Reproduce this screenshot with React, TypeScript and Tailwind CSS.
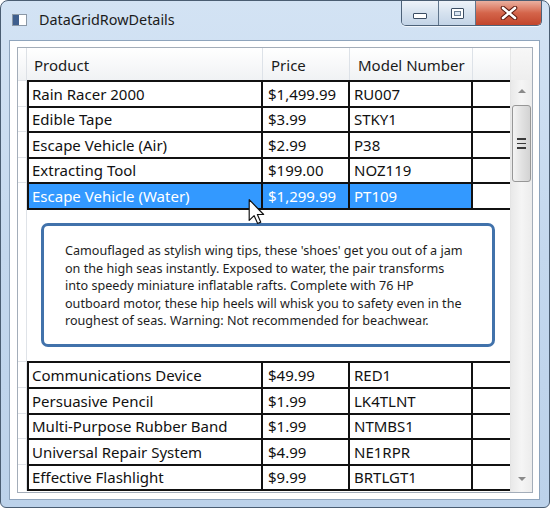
import clsx from "clsx";

type Item = [string, string, string];

const topItems: Item[] = [
  ["Rain Racer 2000", "$1,499.99", "RU007"],
  ["Edible Tape", "$3.99", "STKY1"],
  ["Escape Vehicle (Air)", "$2.99", "P38"],
  ["Extracting Tool", "$199.00", "NOZ119"],
  ["Escape Vehicle (Water)", "$1,299.99", "PT109"],
];

const bottomItems: Item[] = [
  ["Communications Device", "$49.99", "RED1"],
  ["Persuasive Pencil", "$1.99", "LK4TLNT"],
  ["Multi-Purpose Rubber Band", "$1.99", "NTMBS1"],
  ["Universal Repair System", "$4.99", "NE1RPR"],
  ["Effective Flashlight", "$9.99", "BRTLGT1"],
];

const description = [
  "Camouflaged as stylish wing tips, these 'shoes' get you out of a jam",
  "on the high seas instantly. Exposed to water, the pair transforms",
  "into speedy miniature inflatable rafts. Complete with 76 HP",
  "outboard motor, these hip heels will whisk you to safety even in the",
  "roughest of seas. Warning: Not recommended for beachwear.",
];

function Row({ item, selected, last }: { item: Item; selected?: boolean; last?: boolean }) {
  const cell = clsx("flex items-center overflow-hidden whitespace-nowrap", selected ? "bg-[#3399ff] text-white" : "text-[#111]");
  return (
    <div className={clsx("flex shrink-0", last ? "h-[27.6px]" : "h-[25.6px]")}>
      <div className="w-[9px] shrink-0 border-r border-t border-[#dfe3e8]" />
      <div className={clsx("flex flex-1 border-t-2 border-[#111]", last && "border-b-2")}>
        <div className={clsx(cell, "w-[236px] border-x-2 border-[#111] pl-[3px]")}>{item[0]}</div>
        <div className={clsx(cell, "w-[87px] border-r-2 border-[#111] pl-[5px]")}>{item[1]}</div>
        <div className={clsx(cell, "w-[123px] border-r-2 border-[#111] pl-[4px]")}>{item[2]}</div>
        <div className="flex-1 bg-white" />
      </div>
    </div>
  );
}

function Cursor() {
  return (
    <svg className="absolute left-[247px] top-[198px]" width="18" height="26" viewBox="0 0 13 20">
      <path
        d="M0.5 0.5 L0.5 16.5 L4.3 12.8 L7 18.8 L9.4 17.8 L6.8 11.9 L11.6 11.9 Z"
        fill="white"
        stroke="#111"
        strokeWidth="0.9"
        strokeLinejoin="round"
      />
    </svg>
  );
}

function TitleButtons() {
  return (
    <div className="mr-[7px] flex h-[25px] overflow-hidden rounded-b-[5px] border border-t-0 border-[#4d6279] shadow-[0_1px_0_rgba(255,255,255,0.7)]">
      <div className="flex w-[37px] items-center justify-center border-r border-[#60758c] bg-gradient-to-b from-[#eef3f9] via-[#d6e2ef] to-[#c3d4e7]">
        <div className="mt-[6px] h-[6px] w-[14px] rounded-[1px] border border-[#3b4d63] bg-white" />
      </div>
      <div className="flex w-[37px] items-center justify-center border-r border-[#60758c] bg-gradient-to-b from-[#eef3f9] via-[#d6e2ef] to-[#c3d4e7]">
        <div className="h-[11px] w-[13px] rounded-[1px] border border-[#3b4d63] bg-white p-[2px]">
          <div className="h-full w-full border border-[#6b7f95] bg-[#dbe6f2]" />
        </div>
      </div>
      <div className="flex w-[65px] items-center justify-center bg-gradient-to-b from-[#eab0a0] via-[#d4644a] to-[#c2452c]">
        <svg width="18" height="14" viewBox="0 0 18 14">
          <path d="M3 2 L15 12 M15 2 L3 12" stroke="#5a1a10" strokeWidth="4.6" strokeLinecap="round" />
          <path d="M3 2 L15 12 M15 2 L3 12" stroke="white" strokeWidth="2.6" strokeLinecap="round" />
        </svg>
      </div>
    </div>
  );
}

function ScrollBar() {
  return (
    <div className="flex w-[22px] shrink-0 flex-col border-l border-[#e4e4e4] bg-gradient-to-r from-[#e9e9e9] via-[#f5f5f5] to-[#ececec]">
      <div className="h-[32px] shrink-0 bg-gradient-to-b from-[#f7f7f7] to-[#eeeeee]" />
      <div className="flex h-[25px] shrink-0 items-center justify-center pb-[3px]">
        <div className="h-0 w-0 border-x-[4px] border-b-[4px] border-x-transparent border-b-[#8a8a8a]" />
      </div>
      <div className="mx-[1px] flex h-[77px] shrink-0 flex-col items-center justify-center gap-[3px] rounded-[3px] border border-[#979797] bg-gradient-to-r from-[#f4f4f4] via-[#e2e2e2] to-[#d3d3d3] pr-[1px]">
        <div className="h-[1.5px] w-[9px] bg-[#3a3a3a]" />
        <div className="h-[1.5px] w-[9px] bg-[#3a3a3a]" />
        <div className="h-[1.5px] w-[9px] bg-[#3a3a3a]" />
      </div>
      <div className="flex-1" />
      <div className="flex h-[28px] shrink-0 items-center justify-center pt-[2px]">
        <div className="h-0 w-0 border-x-[4px] border-t-[4px] border-x-transparent border-t-[#8a8a8a]" />
      </div>
    </div>
  );
}

export default function App() {
  return (
    <div className="h-[509px] w-[551px] bg-white font-['Noto_Sans',sans-serif]">
      <div className="relative flex h-[508px] w-[550px] flex-col rounded-t-[8px] rounded-b-[6px] border border-[#4a5d72] bg-gradient-to-b from-[#d3e3f4] via-[#c4d8ee] to-[#bcd2ea]">
        <div className="flex h-[39px] shrink-0 items-start justify-between">
          <div className="flex h-[38px] items-center pl-[11px]">
            <div className="flex h-[12px] w-[15px] border border-[#8b98a6] bg-white">
              <div className="w-[6px] bg-[#3f5f8e]" />
            </div>
            <span className="ml-[12px] text-[14.4px] text-[#1c1c1c]">DataGridRowDetails</span>
          </div>
          <TitleButtons />
        </div>

        <div className="mb-[7px] ml-[8px] mr-[9px] flex flex-1 flex-col border border-[#8ea4bc] bg-white pb-[6px] pl-[7px] pr-[6px] pt-[6px]">
          <div className="flex flex-1 border border-[#a3adb9] text-[15px]">
            <div className="flex flex-1 flex-col">
              <div className="flex h-[32px] shrink-0 bg-gradient-to-b from-white to-[#f0f2f4] text-[#1b1b1b]">
                <div className="w-[9px] shrink-0 border-r border-[#dde1e6]" />
                <div className="flex w-[236px] items-center border-r border-[#dde2e8] pl-[7px] pt-[2px]">Product</div>
                <div className="flex w-[87px] items-center border-r border-[#dde2e8] pl-[8px] pt-[2px]">Price</div>
                <div className="flex w-[123px] items-center border-r border-[#dde2e8] pl-[8px] pt-[2px]">Model Number</div>
                <div className="flex-1" />
              </div>

              {topItems.map((item, i) => (
                <Row key={item[2]} item={item} selected={i === 4} />
              ))}

              <div className="flex h-[153.4px] shrink-0">
                <div className="w-[9px] shrink-0 border-r border-[#dfe3e8]" />
                <div className="flex flex-1 flex-col border-t-2 border-[#111] pb-[14px] pl-[14px] pr-[15px] pt-[13px]">
                  <div className="flex flex-1 flex-col justify-center rounded-[7px] border-[3px] border-[#4172ab] pl-[21px] pt-[2px] text-[12.6px] leading-[17.5px] text-[#1e1e1e]">
                    {description.map((line) => (
                      <div key={line} className="whitespace-nowrap">
                        {line}
                      </div>
                    ))}
                  </div>
                </div>
              </div>

              {bottomItems.map((item, i) => (
                <Row key={item[2]} item={item} last={i === bottomItems.length - 1} />
              ))}
            </div>
            <ScrollBar />
          </div>
        </div>

        <Cursor />
      </div>
    </div>
  );
}
